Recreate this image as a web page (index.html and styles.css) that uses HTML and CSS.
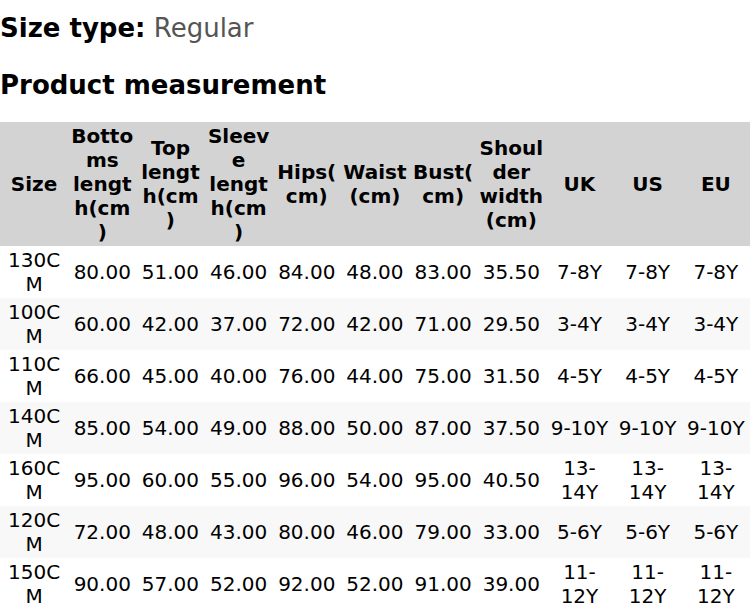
FILE: index.html
```html
<!DOCTYPE html>
<html>
<head>
<meta charset="utf-8">
<link rel="stylesheet" href="styles.css">
</head>
<body>
<div class="size-type"><span class="label">Size type:</span> <span class="value">Regular</span></div>
<h2 class="title">Product measurement</h2>
<table class="chart">
<thead>
<tr><th>Size</th><th>Bottoms length(cm)</th><th>Top length(cm)</th><th>Sleeve length(cm)</th><th>Hips(cm)</th><th>Waist (cm)</th><th>Bust(cm)</th><th>Shoulder width (cm)</th><th>UK</th><th>US</th><th>EU</th></tr>
</thead>
<tbody>
<tr><td>130CM</td><td>80.00</td><td>51.00</td><td>46.00</td><td>84.00</td><td>48.00</td><td>83.00</td><td>35.50</td><td>7-8Y</td><td>7-8Y</td><td>7-8Y</td></tr>
<tr><td>100CM</td><td>60.00</td><td>42.00</td><td>37.00</td><td>72.00</td><td>42.00</td><td>71.00</td><td>29.50</td><td>3-4Y</td><td>3-4Y</td><td>3-4Y</td></tr>
<tr><td>110CM</td><td>66.00</td><td>45.00</td><td>40.00</td><td>76.00</td><td>44.00</td><td>75.00</td><td>31.50</td><td>4-5Y</td><td>4-5Y</td><td>4-5Y</td></tr>
<tr><td>140CM</td><td>85.00</td><td>54.00</td><td>49.00</td><td>88.00</td><td>50.00</td><td>87.00</td><td>37.50</td><td>9-10Y</td><td>9-10Y</td><td>9-10Y</td></tr>
<tr><td>160CM</td><td>95.00</td><td>60.00</td><td>55.00</td><td>96.00</td><td>54.00</td><td>95.00</td><td>40.50</td><td>13-14Y</td><td>13-14Y</td><td>13-14Y</td></tr>
<tr><td>120CM</td><td>72.00</td><td>48.00</td><td>43.00</td><td>80.00</td><td>46.00</td><td>79.00</td><td>33.00</td><td>5-6Y</td><td>5-6Y</td><td>5-6Y</td></tr>
<tr><td>150CM</td><td>90.00</td><td>57.00</td><td>52.00</td><td>92.00</td><td>52.00</td><td>91.00</td><td>39.00</td><td>11-12Y</td><td>11-12Y</td><td>11-12Y</td></tr>
</tbody>
</table>
</body>
</html>
```
FILE: styles.css
```css
html, body {
  margin: 0;
  padding: 0;
  background: #ffffff;
}
body {
  font-family: "DejaVu Sans", sans-serif;
  color: #000;
}
.size-type {
  margin: 13px 0 0;
  font-size: 26px;
  line-height: 30px;
}
.size-type .label {
  font-weight: bold;
}
.size-type .value {
  color: #555555;
}
.title {
  margin: 27px 0 22px;
  font-size: 26px;
  line-height: 30px;
  font-weight: bold;
}
.chart {
  width: 750px;
  table-layout: fixed;
  border-collapse: collapse;
  font-size: 20px;
  line-height: 24px;
}
.chart th, .chart td {
  padding: 2px;
  text-align: center;
  vertical-align: middle;
  overflow-wrap: break-word;
  word-wrap: break-word;
}
.chart thead tr {
  background: #d3d3d3;
}
.chart th {
  font-weight: bold;
}
.chart tbody tr:nth-child(even) {
  background: #f8f8f8;
}
```
